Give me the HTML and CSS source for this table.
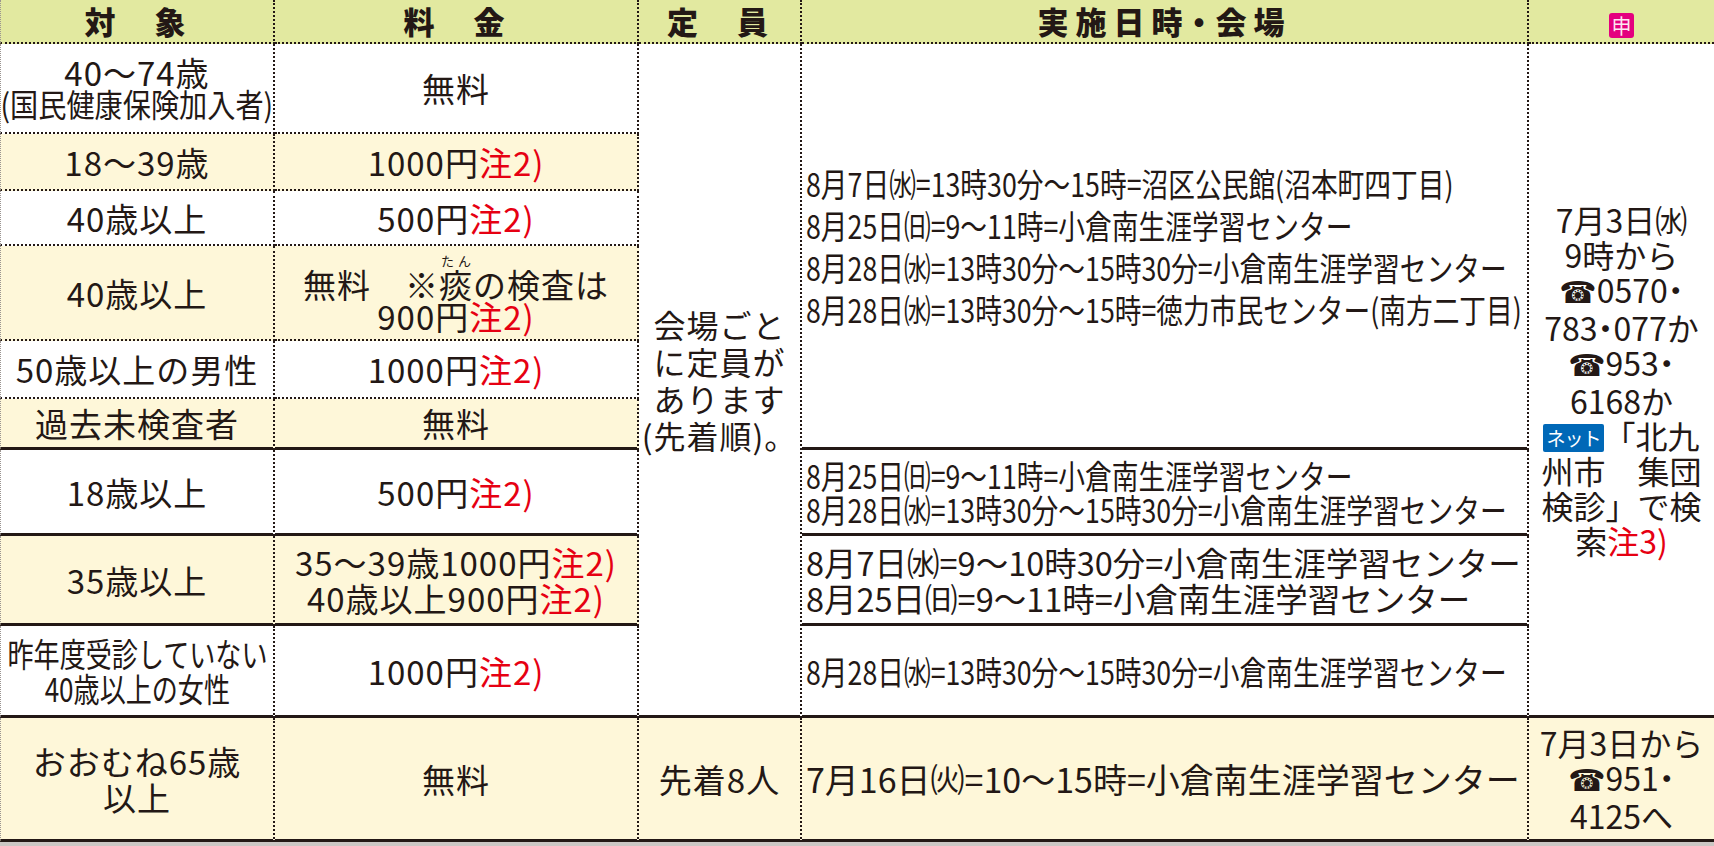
FILE: index.html
```html
<!DOCTYPE html>
<html lang="ja">
<head>
<meta charset="utf-8">
<title>集団健診日程</title>
<link rel="stylesheet" href="styles.css">
</head>
<body>
<table class="sched">
  <colgroup>
    <col class="c1"><col class="c2"><col class="c3"><col class="c4"><col class="c5">
  </colgroup>
  <thead>
    <tr class="r0">
      <th class="first">対　象</th>
      <th>料　金</th>
      <th>定　員</th>
      <th class="wide">実施日時<span class="hdot">・</span>会場</th>
      <th class="last"><span class="moushi">申</span></th>
    </tr>
  </thead>
  <tbody>
    <tr class="r1">
      <td class="first"><div class="stack"><span class="ln">40～74歳</span><span class="ln cc1">(国民健康保険加入者)</span></div></td>
      <td>無料</td>
      <td rowspan="9" class="sb cap">会場ごと<br>に定員が<br>あります<br>(先着順)。</td>
      <td rowspan="6" class="sb place">
        <span class="cl tall">8月7日㈬=13時30分～15時=沼区公民館(沼本町四丁目)</span>
        <span class="cl tall">8月25日㈰=9～11時=小倉南生涯学習センター</span>
        <span class="cl tall">8月28日㈬=13時30分～15時30分=小倉南生涯学習センター</span>
        <span class="cl tall">8月28日㈬=13時30分～15時=徳力市民センター(南方二丁目)</span>
      </td>
      <td rowspan="9" class="sb last apply">7月3日㈬<br>9時から<br><span class="tel">☎</span>0570<span class="dot">・</span><br>783<span class="dot">・</span>077か<br><span class="tel">☎</span>953<span class="dot">・</span><br>6168か<br><span class="net">ネット</span>「北九<br>州市　集団<br>検診」で検<br>索<span class="note">注3)</span></td>
    </tr>
    <tr class="r2">
      <td class="first cr">18～39歳</td>
      <td class="cr">1000円<span class="note">注2)</span></td>
    </tr>
    <tr class="r3">
      <td class="first">40歳以上</td>
      <td>500円<span class="note">注2)</span></td>
    </tr>
    <tr class="r4">
      <td class="first cr">40歳以上</td>
      <td class="cr"><span class="ln">無料　※<ruby>痰<rt>たん</rt></ruby>の検査は</span><span class="ln">900円<span class="note">注2)</span></span></td>
    </tr>
    <tr class="r5">
      <td class="first">50歳以上の男性</td>
      <td>1000円<span class="note">注2)</span></td>
    </tr>
    <tr class="r6">
      <td class="first cr sb">過去未検査者</td>
      <td class="cr sb">無料</td>
    </tr>
    <tr class="r7">
      <td class="first sb">18歳以上</td>
      <td class="sb">500円<span class="note">注2)</span></td>
      <td class="sb place">
        <span class="cl">8月25日㈰=9～11時=小倉南生涯学習センター</span>
        <span class="cl">8月28日㈬=13時30分～15時30分=小倉南生涯学習センター</span>
      </td>
    </tr>
    <tr class="r8">
      <td class="first cr sb">35歳以上</td>
      <td class="cr sb"><span class="ln">35～39歳1000円<span class="note">注2)</span></span><span class="ln">40歳以上900円<span class="note">注2)</span></span></td>
      <td class="sb place big">8月7日㈬=9～10時30分=小倉南生涯学習センター<br>8月25日㈰=9～11時=小倉南生涯学習センター</td>
    </tr>
    <tr class="r9">
      <td class="first sb"><div class="stack"><span class="cc">昨年度受診していない</span><span class="cc">40歳以上の女性</span></div></td>
      <td class="sb">1000円<span class="note">注2)</span></td>
      <td class="sb place">
        <span class="cl">8月28日㈬=13時30分～15時30分=小倉南生涯学習センター</span>
      </td>
    </tr>
    <tr class="r10">
      <td class="first cr end">おおむね65歳<br>以上</td>
      <td class="cr end">無料</td>
      <td class="cr end">先着8人</td>
      <td class="cr end place big2">7月16日㈫=10～15時=小倉南生涯学習センター</td>
      <td class="cr end last apply">7月3日から<br><span class="tel">☎</span>951<span class="dot">・</span><br>4125へ</td>
    </tr>
  </tbody>
</table>
</body>
</html>
```
FILE: styles.css
```css
* { box-sizing: border-box; }
html, body { margin: 0; padding: 0; }
body {
  width: 1714px;
  height: 846px;
  overflow: hidden;
  background: #cbc7c4;
  font-family: "Noto Sans CJK JP", "Noto Sans", sans-serif;
  color: #231815;
}
.sched {
  border-collapse: separate;
  border-spacing: 0;
  table-layout: fixed;
  width: 1714px;
  background: #ffffff;
}
.c1 { width: 275px; }
.c2 { width: 364px; }
.c3 { width: 163px; }
.c4 { width: 727px; }
.c5 { width: 185px; }

th, td {
  padding: 0;
  border-right: 2px dotted #231815;
  border-bottom: 2px dotted #231815;
  text-align: center;
  vertical-align: middle;
  font-weight: 400;
  font-size: 33px;
  line-height: 36px;
  letter-spacing: 1px;
  white-space: nowrap;
  overflow: visible;
}
.first { border-left: 1px dotted #9a9490; }
.last { border-right: none; }
.sb { border-bottom: 3px solid #231815; }
.end { border-bottom: 3px solid #231815; }
.cr { background: #fef7d9; }

th {
  background: #e2e9a0;
  font-weight: 900;
  font-size: 31px;
  letter-spacing: 4px;
  line-height: 40px;
}
th.wide { letter-spacing: 7px; }
.hdot { display: inline-block; margin: 0 -6px; }

.r0 { height: 44px; }
.r1 { height: 90px; }
.r2 { height: 57px; }
.r3 { height: 55px; }
.r4 { height: 95px; }
.r5 { height: 58px; }
.r6 { height: 51px; }
.r7 { height: 86px; }
.r8 { height: 90px; }
.r9 { height: 92px; }
.r10 { height: 124px; }

.moushi {
  display: inline-block;
  width: 25px;
  height: 25px;
  background: #e4007f;
  color: #fde6f1;
  border-radius: 3px;
  font-size: 20px;
  line-height: 25px;
  font-weight: 400;
  letter-spacing: 0;
  vertical-align: middle;
}

.stack {
  display: flex;
  flex-direction: column;
  align-items: center;
  width: 100%;
}
.ln { display: block; line-height: 31px; }
.cc1 {
  font-size: 32px;
  letter-spacing: 0;
  transform: scaleX(0.88);
}
.r4 .ln { line-height: 32px; }
.r8 .ln { line-height: 36px; }
ruby rt { font-size: 13px; line-height: 13px; letter-spacing: 0; }

.note { color: #e60012; }

.cc {
  display: block;
  letter-spacing: 0;
  transform: scaleX(0.79);
  line-height: 35px;
}

.cap { font-size: 32px; line-height: 37px; }

.place {
  text-align: left;
  padding-left: 4px;
  letter-spacing: 0;
}
.cl {
  display: block;
  font-size: 33px;
  line-height: 34px;
  transform: scaleX(0.81);
  transform-origin: left center;
}
.cl.tall { line-height: 42px; }
.place.big { font-size: 32.5px; line-height: 36px; }
.place.big2 { font-size: 34px; }

.apply { font-size: 32px; line-height: 35px; letter-spacing: 0; }
.dot { display: inline-block; margin: 0 -8px; }
.tel {
  font-family: "DejaVu Sans", sans-serif;
  font-size: 30px;
}
.net {
  display: inline-block;
  background: #0068b7;
  color: #ffffff;
  font-size: 19px;
  font-weight: 400;
  line-height: 28px;
  height: 28px;
  padding: 0 3px;
  border-radius: 2px;
  vertical-align: 3px;
  letter-spacing: -1px;
}
```
